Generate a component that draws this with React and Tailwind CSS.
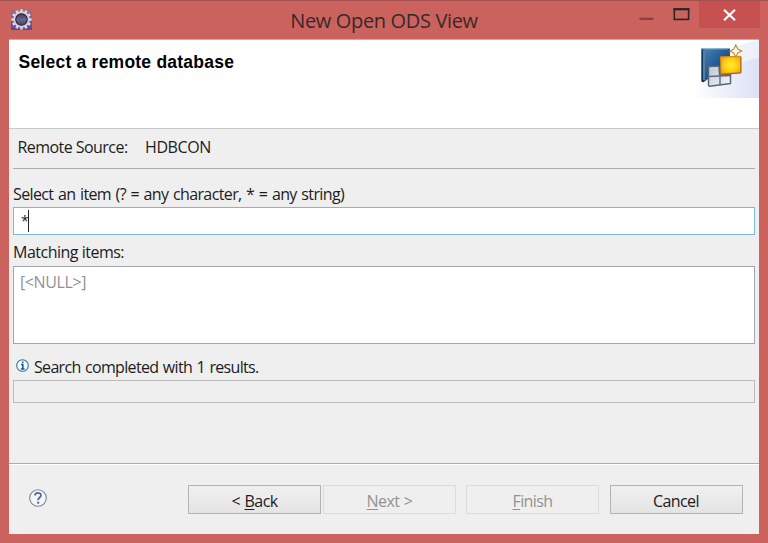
import React from "react";

function GearIcon() {
  const teeth = Array.from({ length: 12 }, (_, i) => i * 30);
  return (
    <svg className="mt-[8px] ml-[10.5px] h-[21px] w-[21px]" viewBox="0 0 21 21">
      <defs>
        <linearGradient id="gearBg" x1="0" y1="0" x2="0" y2="1">
          <stop offset="0" stopColor="#a06f82" />
          <stop offset="1" stopColor="#5c4496" />
        </linearGradient>
        <linearGradient id="gearCore" x1="0" y1="0" x2="0" y2="1">
          <stop offset="0" stopColor="#34304f" />
          <stop offset="0.5" stopColor="#6b648f" />
          <stop offset="1" stopColor="#3f3868" />
        </linearGradient>
      </defs>
      <rect width="21" height="21" fill="url(#gearBg)" />
      {teeth.map((a) => (
        <rect key={a} x="9.2" y="0.4" width="2.6" height="3.5" fill="#dcd8da" transform={`rotate(${a} 10.5 10.5)`} />
      ))}
      <circle cx="10.5" cy="10.5" r="7.2" fill="url(#gearCore)" stroke="#d6d1d4" strokeWidth="2.2" />
      <circle cx="10.5" cy="10.5" r="5.7" fill="none" stroke="#2e2941" strokeWidth="1.1" />
    </svg>
  );
}

function DatabaseArt() {
  return (
    <svg className="h-[58px] w-[78px]" viewBox="0 0 78 58">
      <defs>
        <linearGradient id="glow" x1="0" y1="0" x2="1" y2="0">
          <stop offset="0" stopColor="#ffffff" />
          <stop offset="1" stopColor="#dce1f6" />
        </linearGradient>
        <linearGradient id="swoosh" x1="0" y1="0" x2="1" y2="0">
          <stop offset="0" stopColor="#ffffff" />
          <stop offset="1" stopColor="#eceffa" />
        </linearGradient>
        <linearGradient id="blue" x1="0" y1="0" x2="1" y2="1">
          <stop offset="0" stopColor="#4b86b5" />
          <stop offset="0.5" stopColor="#1f5a93" />
          <stop offset="1" stopColor="#0d3c70" />
        </linearGradient>
        <radialGradient id="gold" cx="0.52" cy="0.5" r="0.65">
          <stop offset="0" stopColor="#ffee22" />
          <stop offset="0.45" stopColor="#ffd51b" />
          <stop offset="1" stopColor="#ee9a12" />
        </radialGradient>
        <linearGradient id="pane" x1="0" y1="0" x2="1" y2="1">
          <stop offset="0" stopColor="#bcc9d9" />
          <stop offset="1" stopColor="#f4f7fb" />
        </linearGradient>
      </defs>
      <path d="M10 58 C28 22 50 4 78 0 V58Z" fill="url(#swoosh)" />
      <path d="M10 58 C32 34 56 22 78 18 V58Z" fill="url(#glow)" />
      <path d="M20.5 8.5H49V32L27 39L23 42H20.5Z" fill="url(#blue)" />
      <path d="M20.5 8.5L24 9.5V39L22.5 42.5L20.5 41Z" fill="#093762" />
      <path d="M23 10V40" stroke="#a9c8df" strokeWidth="1" />
      <path d="M21 9H47" stroke="#7daaca" strokeWidth="0.8" />
      <path d="M27.5 26.5L38 26L38.5 34.5H49.5V43.5L28.5 46.3L27.5 45.5Z" fill="url(#pane)" stroke="#5b6574" strokeWidth="1.5" strokeLinejoin="round" />
      <path d="M39 27V45M27.5 36.5L49 35.5" stroke="#5f6979" strokeWidth="1.4" />
      <path d="M39.5 16.8L59.5 16.3V32.5L40 34Z" fill="url(#gold)" stroke="#d9860b" strokeWidth="1" />
      <path d="M40 34.5L60 33V16.5" stroke="#a8640c" strokeWidth="1" fill="none" />
      <path d="M54.8 5L56.8 9.1L60.8 11L56.8 13L54.8 17L52.8 13L48.8 11L52.8 9.1Z" fill="#fffbe9" stroke="#ba9135" strokeWidth="1.1" />
    </svg>
  );
}

function WindowButtons() {
  return (
    <div className="flex">
      <svg className="h-7 w-[60px]" viewBox="0 0 60 28">
        <path d="M0.5 17.8H14.5" stroke="#824240" strokeWidth="2.2" />
        <rect x="35.3" y="8" width="14.3" height="10.4" fill="none" stroke="#2b2626" strokeWidth="1.6" />
        <path d="M34.5 8.3H50.4" stroke="#2b2626" strokeWidth="2" />
      </svg>
      <div className="flex h-[27px] w-[61px] items-center justify-center bg-[#c75050]">
        <svg className="h-[12px] w-[13px]" viewBox="0 0 13 12">
          <path d="M1 0.8L12 11.2M12 0.8L1 11.2" stroke="#fff" strokeWidth="2.2" />
        </svg>
      </div>
    </div>
  );
}

function DialogButton({ children, disabled, className = "" }) {
  const tone = disabled
    ? "border-[#dcdcdc] bg-[#efefef] text-[#929292]"
    : "border-[#b3b3b3] bg-linear-to-b from-[#f0f0f0] to-[#e4e4e4] text-[#1c1c1c]";
  return (
    <button disabled={disabled} className={`flex h-[29px] w-[133px] items-center justify-center border whitespace-pre pt-[2px] tracking-[-0.6px] [word-spacing:1px] ${tone} ${className}`}>
      {children}
    </button>
  );
}

const key = "underline decoration-1 underline-offset-2";

export default function App() {
  return (
    <div className="flex h-[543px] w-[768px] flex-col overflow-hidden border-t border-[#a4504e] bg-[#cc625e] font-['Open_Sans','Noto_Sans',sans-serif] text-[16px] leading-5 tracking-[-0.5px] text-[#1c1c1c]">
      <header className="grid h-[38px] shrink-0 grid-cols-[129px_1fr_129px]">
        <GearIcon />
        <h1 className="pt-[8px] text-center text-[20px] leading-6 tracking-[-0.35px] text-[#352a2a]">New Open ODS View</h1>
        <WindowButtons />
      </header>

      <main className="mr-[9px] ml-[8.5px] flex h-[495px] flex-col border-t border-[#e0a09d] bg-[#efefef]">
        <section className="flex h-[89px] shrink-0 justify-between border-b border-[#c9c9c9] bg-white">
          <h2 className="pt-[12px] pl-[10px] font-['Liberation_Sans',Arial,sans-serif] text-[17.5px] leading-5 font-bold tracking-[0.23px] text-black">Select a remote database</h2>
          <DatabaseArt />
        </section>

        <section className="mr-[4px] ml-[4.5px] flex h-[334px] shrink-0 flex-col">
          <div className="flex h-[40px] shrink-0 items-center border-b border-[#adadad] pb-[3px] pl-[4.5px]">
            <span className="w-[127.5px] tracking-[-0.55px]">Remote Source:</span>
            <span className="tracking-[-0.4px]">HDBCON</span>
          </div>
          <label className="mt-[14.5px] tracking-[-0.62px] [word-spacing:1px]">Select an item (? = any character, * = any string)</label>
          <div className="mt-[3.5px] flex h-[28px] shrink-0 items-center border border-[#7eb4ea] bg-white pl-[7px]">
            <span className="w-[6.5px] text-[14px]">*</span>
            <span className="h-[22px] w-px bg-[#222]" />
          </div>
          <label className="mt-[7px]">Matching items:</label>
          <div className="mt-[3.5px] h-[78px] shrink-0 border border-[#a2a6ae] bg-white pt-[5px] pl-[6px] tracking-[-0.4px] text-[#929292]">[&lt;NULL&gt;]</div>
          <div className="mt-[13px] flex items-center">
            <svg className="mr-[5px] mb-[3px] ml-[3px] h-[13px] w-[13px]" viewBox="0 0 13 13">
              <circle cx="6.5" cy="6.5" r="5.8" fill="#fbfdff" stroke="#2874ae" strokeWidth="1.1" />
              <path d="M6.7 2.4V4.1M5 5.5H6.8V10M4.8 10H8.6" fill="none" stroke="#125b9b" strokeWidth="1.6" />
            </svg>
            <span className="tracking-[-0.68px] [word-spacing:1px]">Search completed with 1 results.</span>
          </div>
          <div className="mt-[3px] h-[23px] shrink-0 border border-[#bcbcbc]" />
        </section>

        <footer className="flex h-[71px] shrink-0 items-start border-t border-[#adadad] pt-[21px] shadow-[inset_0_1px_0_#fff]">
          <svg className="mt-[4px] ml-[20px] h-[18px] w-[18px]" viewBox="0 0 18 18">
            <circle cx="9" cy="9" r="8.3" fill="#f3f6fa" stroke="#76859d" strokeWidth="1.1" />
            <path d="M6 6.5C6 3 12 3.1 12 6.3C12 8.6 9.1 8.4 9.1 11.2" fill="none" stroke="#576b8d" strokeWidth="1.8" />
            <path d="M8.1 12.7H10.2V14.7H8.1Z" fill="#576b8d" />
          </svg>
          <DialogButton className="ml-[141.5px]"><span>&lt; <span className={key}>B</span>ack</span></DialogButton>
          <DialogButton disabled className="ml-[2px]"><span><span className={key}>N</span>ext &gt;</span></DialogButton>
          <DialogButton disabled className="ml-[10px]"><span><span className={key}>F</span>inish</span></DialogButton>
          <DialogButton className="ml-[10.5px]">Cancel</DialogButton>
        </footer>
      </main>
    </div>
  );
}
